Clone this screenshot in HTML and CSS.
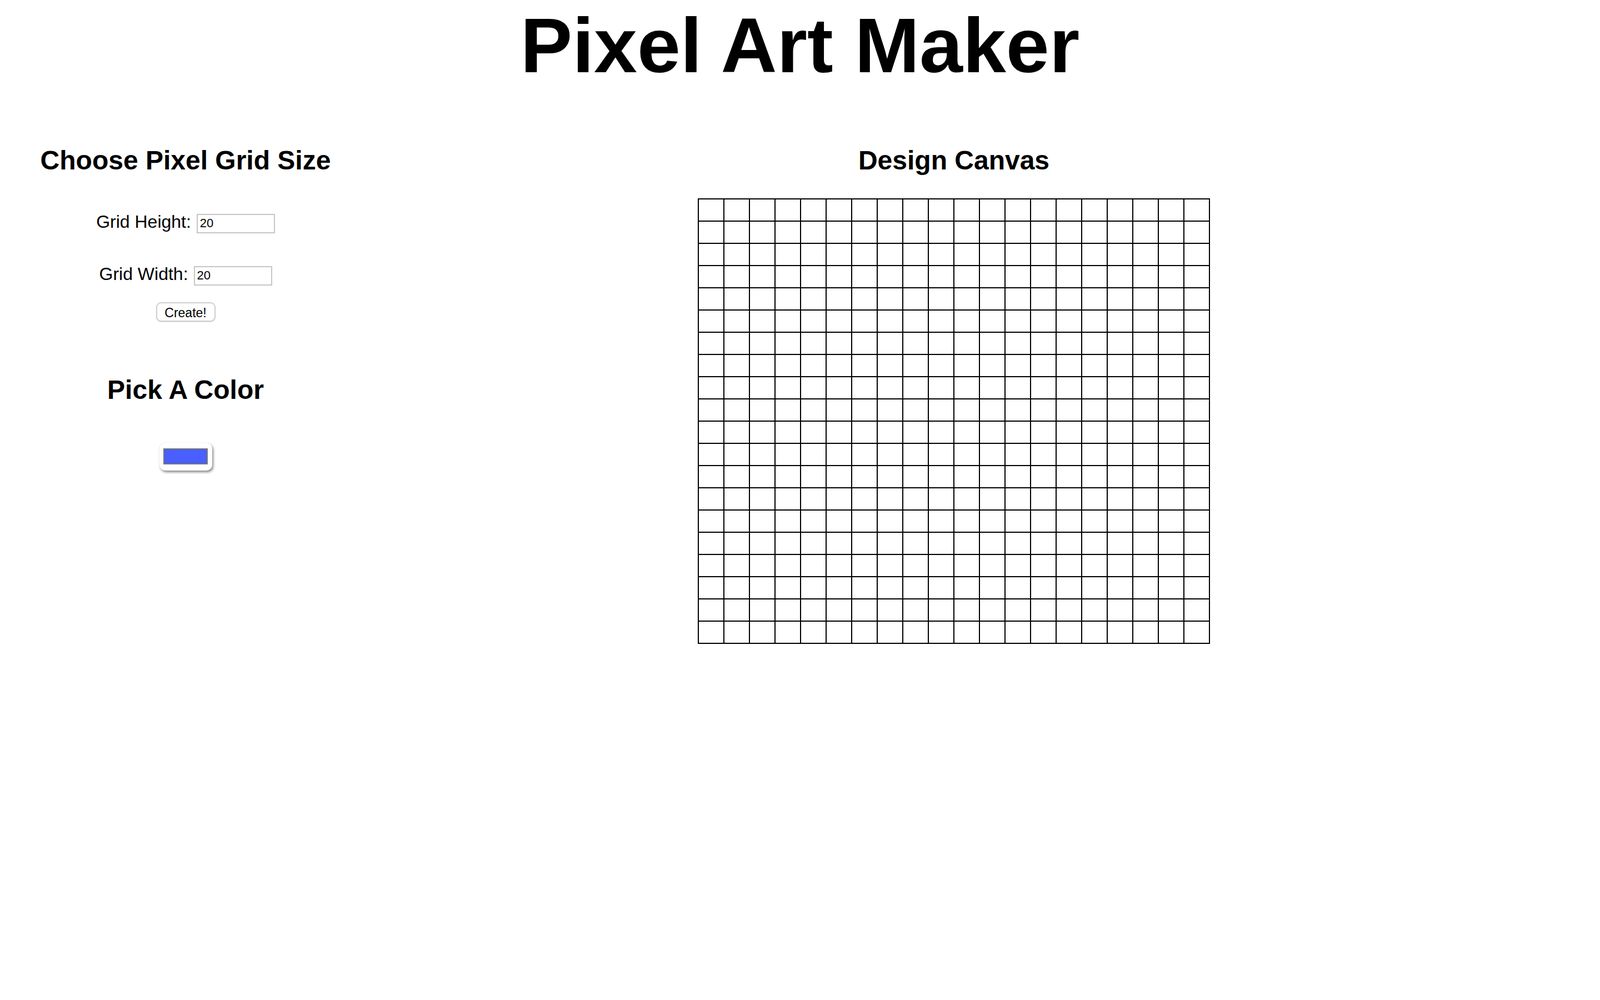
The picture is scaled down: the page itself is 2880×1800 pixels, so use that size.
FILE: index.html
```html
<!DOCTYPE html>
<html lang="en">
<head>
    <meta charset="UTF-8">
    <title>Pixel Art Maker</title>
    <link rel="stylesheet" href="styles.css">
</head>
<body>

<h1>Pixel Art Maker</h1>

<main class="layout">
    <section class="controls">
        <h2>Choose Pixel Grid Size</h2>
        <form id="sizePicker" class="size-form">
            <div class="field">
                <label for="inputHeight">Grid Height:</label>
                <input type="number" id="inputHeight" name="height" min="1" value="20">
            </div>
            <div class="field">
                <label for="inputWidth">Grid Width:</label>
                <input type="number" id="inputWidth" name="width" min="1" value="20">
            </div>
            <input type="submit" class="create-btn" value="Create!">
        </form>

        <h2 class="color-title">Pick A Color</h2>
        <input type="color" id="colorPicker" class="color-picker" value="#4a5fff">
    </section>

    <section class="canvas">
        <h2>Design Canvas</h2>
        <table id="pixelCanvas" class="pixel-canvas"></table>
    </section>
</main>

<script>
document.addEventListener('DOMContentLoaded', () => {
    const form = document.getElementById('sizePicker');
    const canvas = document.getElementById('pixelCanvas');
    const picker = document.getElementById('colorPicker');

    // --- Build the grid ---
    function makeGrid(rows, cols) {
        canvas.innerHTML = '';
        for (let r = 0; r < rows; r++) {
            const tr = canvas.insertRow();
            for (let c = 0; c < cols; c++) {
                tr.insertCell();
            }
        }
    }

    form.addEventListener('submit', e => {
        e.preventDefault();
        makeGrid(+form.height.value, +form.width.value);
    });

    // --- Paint a cell ---
    canvas.addEventListener('click', e => {
        if (e.target.tagName === 'TD') {
            e.target.style.backgroundColor = picker.value;
        }
    });

    makeGrid(20, 20);
});
</script>

</body>
</html>
```

FILE: styles.css
```css
body {
    margin: 0;
    background: #fff;
    color: #000;
    font-family: "Liberation Sans", Helvetica, Arial, sans-serif;
}

h1 {
    margin: 4px 0 0;
    font-size: 140px;
    line-height: 156px;
    text-align: center;
}

h2 {
    margin: 0;
    font-size: 48px;
    line-height: 56px;
    text-align: center;
}

/* --- Two columns --- */
.layout {
    display: grid;
    grid-template-columns: 668px 2098px;
    padding-top: 101px;
}

/* --- Left: grid size + colour --- */
.size-form {
    display: flex;
    flex-direction: column;
    align-items: center;
    margin-top: 65px;
}

.field {
    display: flex;
    align-items: center;
    gap: 10px;
    font-size: 32px;
}
.field + .field {
    margin-top: 54px;
}
.field label {
    line-height: 35px;
    padding-bottom: 5px;
}
.field input {
    box-sizing: border-box;
    width: 141px;
    height: 35px;
    padding: 0 4px;
    border: 2px solid #c6c6c6;
    border-radius: 0;
    font-family: "Liberation Sans", Arial, sans-serif;
    font-size: 22px;
    color: #000;
    -moz-appearance: textfield;
}
.field input::-webkit-inner-spin-button,
.field input::-webkit-outer-spin-button {
    -webkit-appearance: none;
    margin: 0;
}

.create-btn {
    box-sizing: border-box;
    width: 107px;
    height: 35px;
    margin-top: 28px;
    padding: 3px 0 0;
    background: #fff;
    border: 2px solid #cfcfcf;
    border-radius: 9px;
    box-shadow: 0 1px 1px rgba(0, 0, 0, 0.12);
    font-family: "Liberation Sans", Arial, sans-serif;
    font-size: 23px;
    color: #000;
    cursor: pointer;
}

.color-title {
    margin-top: 95px;
}

.color-picker {
    -webkit-appearance: none;
    appearance: none;
    display: block;
    box-sizing: border-box;
    width: 95px;
    height: 50px;
    margin: 67px auto 0;
    padding: 10px 8px 11px 7px;
    background: #fff;
    border: none;
    border-radius: 10px;
    box-shadow: 0 0 1px rgba(0, 0, 0, 0.2), 2px 3px 4px rgba(0, 0, 0, 0.45);
    cursor: pointer;
}
.color-picker::-webkit-color-swatch-wrapper {
    padding: 0;
}
.color-picker::-webkit-color-swatch {
    border: 2px solid #777;
    border-radius: 0;
}

/* --- Right: canvas --- */
.pixel-canvas {
    margin: 40px auto 0;
    border-collapse: collapse;
}
.pixel-canvas td {
    width: 44px;
    height: 38px;
    padding: 0;
    border: 2px solid #000;
}
```
